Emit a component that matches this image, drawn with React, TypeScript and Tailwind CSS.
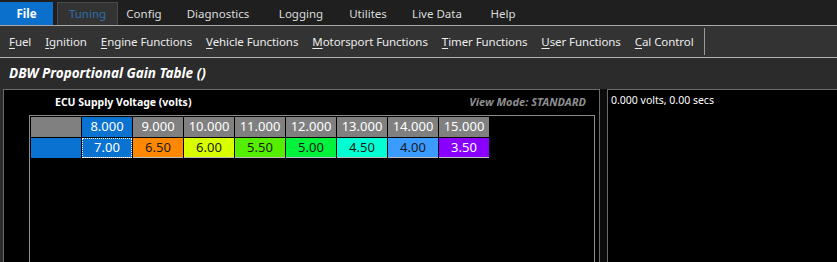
import React from "react";

const tabs = [
  { label: "Config", w: "w-[52px]" },
  { label: "Diagnostics", w: "w-[96px]" },
  { label: "Logging", w: "w-[70px]" },
  { label: "Utilites", w: "w-[64px]" },
  { label: "Live Data", w: "w-[74px]" },
  { label: "Help", w: "w-[58px]" },
];

const menus = [
  ["F", "uel"],
  ["I", "gnition"],
  ["E", "ngine Functions"],
  ["V", "ehicle Functions"],
  ["M", "otorsport Functions"],
  ["T", "imer Functions"],
  ["U", "ser Functions"],
  ["C", "al Control"],
];

const axis = ["8.000", "9.000", "10.000", "11.000", "12.000", "13.000", "14.000", "15.000"];

const cells = [
  { v: "7.00", cls: "bg-[#0a72d0] text-white outline outline-1 outline-dotted outline-white -outline-offset-1" },
  { v: "6.50", cls: "bg-[#ff8800] text-[#1a1a1a]" },
  { v: "6.00", cls: "bg-[#d8ff00] text-[#1a1a1a]" },
  { v: "5.50", cls: "bg-[#55ee00] text-[#1a1a1a]" },
  { v: "5.00", cls: "bg-[#00f23c] text-[#1a1a1a]" },
  { v: "4.50", cls: "bg-[#00ffd2] text-[#1a1a1a]" },
  { v: "4.00", cls: "bg-[#3b9bff] text-[#1a1a1a]" },
  { v: "3.50", cls: "bg-[#8a00ff] text-white" },
];

export default function App() {
  return (
    <div
      className="flex h-[262px] w-[837px] flex-col overflow-hidden bg-[#2b2b2b] text-[#e6e6e6]"
      style={{ fontFamily: '"Noto Sans", "Open Sans", sans-serif' }}
    >
      {/* ribbon tabs */}
      <div className="flex h-[25px] items-end bg-[#1f1f1f] text-[11.5px]">
        <div className="flex h-[23px] w-[53px] items-center justify-center bg-[#0b6fcc] font-bold text-white">
          File
        </div>
        <div className="ml-[4px] flex h-[23px] w-[61px] items-center justify-center border border-b-0 border-[#4a4a4a] bg-[#333333] text-[#2d6fae]">
          Tuning
        </div>
        {tabs.map((t) => (
          <div key={t.label} className={`flex h-[23px] items-center justify-center text-[#dcdcdc] ${t.w}`}>
            {t.label}
          </div>
        ))}
      </div>
      <div className="h-px bg-[#a8a8a8]" />

      {/* ribbon commands */}
      <div className="flex h-[31px] items-center bg-[#333333] pl-[9px] text-[11.5px] tracking-[-0.08px] text-[#ececec]">
        {menus.map(([k, rest]) => (
          <span key={k + rest} className="mr-[14px] whitespace-nowrap">
            <span className="underline underline-offset-2">{k}</span>
            {rest}
          </span>
        ))}
        <div className="-ml-[4px] h-[27px] w-px bg-[#9a9a9a]" />
      </div>
      <div className="h-px bg-[#b4b4b4]" />

      {/* title */}
      <div className="flex h-[31px] items-center pl-[9px] text-[13.5px] font-bold italic text-white">
        DBW Proportional Gain Table ()
      </div>

      {/* panels */}
      <div className="flex flex-1 pl-[3px]">
        <div className="flex w-[597px] flex-col border-l border-r border-t border-[#6a6a6a] bg-black">
          <div className="flex h-[25px] items-center justify-between pl-[51px] pr-[13px] text-[10.5px] font-bold">
            <span className="text-white">ECU Supply Voltage (volts)</span>
            <span className="text-[11px] italic text-[#8e8e8e]">View Mode: STANDARD</span>
          </div>
          <div className="ml-[25px] mr-[4px] flex-1 border-l border-r border-t border-[#8a8a8a] pt-px pl-px">
            <div className="grid grid-cols-[50px_repeat(8,50px)] gap-x-px gap-y-px text-[13px]">
              <div className="h-[20px] bg-[#808080]" />
              {axis.map((a, i) => (
                <div
                  key={a}
                  className={`flex h-[20px] items-center justify-center text-white ${i === 0 ? "bg-[#0a72d0]" : "bg-[#808080]"}`}
                >
                  {a}
                </div>
              ))}
              <div className="h-[20px] bg-[#0a72d0]" />
              {cells.map((c) => (
                <div
                  key={c.v}
                  className={`flex h-[20px] items-center justify-center border-b border-[#bdbdbd] ${c.cls}`}
                >
                  {c.v}
                </div>
              ))}
            </div>
          </div>
        </div>
        <div className="w-[7px] bg-[#0c0c0c]" />
        <div className="flex-1 border-l border-t border-[#6a6a6a] bg-black pl-[3px] pt-[3px] text-[10.5px] text-white">
          0.000 volts, 0.00 secs
        </div>
      </div>
    </div>
  );
}
